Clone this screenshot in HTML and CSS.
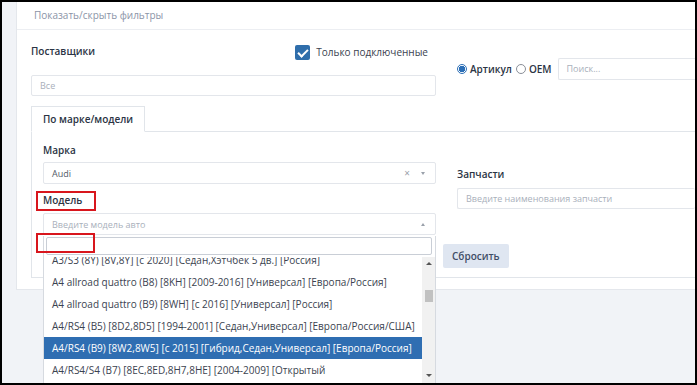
FILE: index.html
```html
<!DOCTYPE html>
<html lang="ru">
<head>
    <meta charset="UTF-8">
    <meta name="viewport" content="width=device-width, initial-scale=1.0">
    <title>Подбор запчастей</title>
    <link rel="stylesheet" href="styles.css">
</head>
<body>
    <div class="frame">
        <div class="card">
            <div class="card-head">Показать/скрыть фильтры</div>

            <div class="card-body">
                <div class="filters-top">
                    <div class="col-left">
                        <div class="label-row">
                            <span class="label">Поставщики</span>
                            <label class="check">
                                <span class="check-box"></span>
                                Только подключенные
                            </label>
                        </div>
                        <div class="input suppliers">Все</div>
                    </div>
                    <div class="col-right">
                        <div class="search-row">
                            <span class="radio checked"></span>
                            <span class="radio-text">Артикул</span>
                            <span class="radio"></span>
                            <span class="radio-text">OEM</span>
                            <div class="input search">Поиск...</div>
                        </div>
                    </div>
                </div>

                <div class="tabs">
                    <div class="tab active">По марке/модели</div>
                </div>

                <div class="tab-panel">
                    <div class="panel-grid">
                        <div class="col-left">
                            <div class="label">Марка</div>
                            <div class="select filled">
                                <span class="select-value">Audi</span>
                                <span class="select-clear">×</span>
                                <span class="caret down"></span>
                            </div>

                            <div class="label model-label">
                                Модель
                                <span class="mark"></span>
                            </div>
                            <div class="select-wrap">
                                <div class="select open">
                                    <span class="select-value placeholder">Введите модель авто</span>
                                    <span class="caret up"></span>
                                </div>

                                <!-- открытый список моделей -->
                                <div class="dropdown">
                                    <div class="dropdown-search">
                                        <div class="dropdown-input"></div>
                                        <span class="mark search-mark"></span>
                                    </div>
                                    <div class="dropdown-body">
                                        <ul class="options">
                                            <li class="first">A3/S3 (8Y) [8V,8Y] [с 2020] [Седан,Хэтчбек 5 дв.] [Россия]</li>
                                            <li>A4 allroad quattro (B8) [8KH] [2009-2016] [Универсал] [Европа/Россия]</li>
                                            <li>A4 allroad quattro (B9) [8WH] [с 2016] [Универсал] [Россия]</li>
                                            <li>A4/RS4 (B5) [8D2,8D5] [1994-2001] [Седан,Универсал] [Европа/Россия/США]</li>
                                            <li class="selected">A4/RS4 (B9) [8W2,8W5] [с 2015] [Гибрид,Седан,Универсал] [Европа/Россия]</li>
                                            <li>A4/RS4/S4 (B7) [8EC,8ED,8H7,8HE] [2004-2009] [Открытый</li>
                                        </ul>
                                        <div class="scrollbar">
                                            <span class="sb-arrow sb-up"></span>
                                            <span class="sb-thumb"></span>
                                            <span class="sb-arrow sb-down"></span>
                                        </div>
                                    </div>
                                </div>
                            </div>
                        </div>

                        <div class="col-right parts">
                            <div class="label">Запчасти</div>
                            <div class="input parts-input">Введите наименования запчасти</div>
                        </div>
                    </div>

                    <div class="actions">
                        <button type="button" class="btn-reset">Сбросить</button>
                    </div>
                </div>
            </div>
        </div>
    </div>
</body>
</html>
```

FILE: styles.css
```css
* {
    box-sizing: border-box;
}
body {
    margin: 0;
    font-family: 'Open Sans', 'Noto Sans', sans-serif;
    font-size: 10px;
    color: #3a4250;
}
.frame {
    height: 385px;
    border: 2px solid #000;
    background-color: #f1f3f7;
    padding-left: 14px;
    overflow: hidden;
}
.card {
    background-color: #fff;
    border-left: 1px solid #e4e7ec;
    border-bottom: 1px solid #e4e7ec;
}
.card-head {
    height: 28px;
    line-height: 27px;
    padding-left: 17px;
    color: #8b94a7;
    border-bottom: 1px solid #eceef2;
}
.card-body {
    padding: 0 0 11px 14px;
}
.label {
    font-weight: 600;
    color: #2b3444;
    line-height: 16px;
}
.input {
    height: 22px;
    line-height: 20px;
    border: 1px solid #e3e6eb;
    border-radius: 2px;
    padding-left: 8px;
    color: #a9b0bb;
    font-size: 9px;
}
.filters-top {
    display: flex;
    margin-top: 13px;
}
.col-left {
    width: 405px;
    flex-shrink: 0;
}
.col-right {
    flex: 1;
    margin-left: 21px;
}
.label-row {
    display: flex;
    justify-content: space-between;
    align-items: center;
    height: 16px;
    padding-right: 8px;
}
.check {
    display: flex;
    align-items: center;
    gap: 6px;
    color: #3a4250;
    margin-top: 2px;
}
.check-box {
    width: 15px;
    height: 15px;
    border-radius: 2px;
    background-color: #2f6eab;
    position: relative;
}
.check-box::after {
    content: '';
    position: absolute;
    left: 5px;
    top: 2px;
    width: 4px;
    height: 8px;
    border: solid #fff;
    border-width: 0 2px 2px 0;
    transform: rotate(45deg);
}
.suppliers {
    margin-top: 16px;
    height: 21px;
}
.search-row {
    display: flex;
    align-items: center;
    margin-top: 15px;
}
.radio {
    width: 10px;
    height: 10px;
    border-radius: 50%;
    border: 1px solid #8a8f98;
    margin-right: 3px;
}
.radio.checked {
    border-color: #2c6fb7;
    background: radial-gradient(circle, #2c6fb7 0 3px, #fff 3.5px);
}
.radio-text {
    font-weight: 600;
    color: #2b3444;
    margin-right: 4px;
}
.search {
    flex: 1;
    margin-left: 2px;
    border-right: none;
    border-radius: 2px 0 0 2px;
}
.tabs {
    display: flex;
    margin-top: 10px;
}
.tab {
    width: 114px;
    height: 26px;
    line-height: 25px;
    padding-left: 11px;
    font-weight: 600;
    color: #2b3444;
    border: 1px solid #e1e5ea;
    border-bottom-color: #fff;
    background-color: #fff;
    margin-bottom: -1px;
    position: relative;
    z-index: 1;
}
.tab-panel {
    border: 1px solid #e1e5ea;
    border-right: none;
    padding: 10px 0 9px 11px;
}
.panel-grid {
    display: flex;
}
.panel-grid .col-left {
    width: 393px;
}
.select {
    height: 22px;
    border: 1px solid #e3e6eb;
    border-radius: 2px;
    display: flex;
    align-items: center;
    padding: 0 10px 0 8px;
    margin-top: 4px;
    font-size: 9px;
}
.select-value {
    flex: 1;
    color: #525a66;
}
.select-value.placeholder {
    color: #a9b0bb;
}
.select-clear {
    color: #9aa1ab;
    font-size: 10px;
    margin-right: 11px;
}
.caret {
    width: 0;
    height: 0;
    border-left: 2.5px solid transparent;
    border-right: 2.5px solid transparent;
}
.caret.down {
    border-top: 3px solid #9aa1ab;
}
.caret.up {
    border-bottom: 3px solid #9aa1ab;
}
.model-label {
    position: relative;
    margin-top: 8px;
}
.mark {
    position: absolute;
    left: -7px;
    top: -1px;
    width: 60px;
    height: 20px;
    border: 2px solid #d8161d;
    z-index: 5;
}
.select-wrap {
    position: relative;
}
.select.open {
    margin-top: 5px;
}
.dropdown {
    position: absolute;
    left: 0;
    top: 23px;
    width: 393px;
    background-color: #fff;
    border: 1px solid #d6dae0;
    border-top: none;
    z-index: 3;
}
.dropdown-search {
    position: relative;
    padding: 1px 3px 2px 2px;
}
.dropdown-input {
    height: 18px;
    border: 1px solid #c9ced6;
    border-radius: 2px;
}
.search-mark {
    left: -8px;
    top: -3px;
    width: 59px;
}
.dropdown-body {
    display: flex;
    height: 126px;
}
.options {
    list-style: none;
    margin: 0;
    padding: 0;
    flex: 1;
    overflow: hidden;
}
.options li {
    height: 22px;
    line-height: 22px;
    padding-left: 8px;
    white-space: nowrap;
    color: #3b4350;
}
.options li.first {
    margin-top: -8px;
}
.options li.selected {
    background-color: #2f6eb2;
    color: #fff;
}
.scrollbar {
    width: 13px;
    background-color: #f1f1f1;
    display: flex;
    flex-direction: column;
    align-items: center;
}
.sb-arrow {
    width: 0;
    height: 0;
    border-left: 3px solid transparent;
    border-right: 3px solid transparent;
}
.sb-up {
    border-bottom: 3px solid #555;
    margin-top: 5px;
}
.sb-thumb {
    width: 8px;
    height: 12px;
    background-color: #c1c1c1;
    margin-top: 25px;
}
.sb-down {
    border-top: 3px solid #555;
    margin-top: auto;
    margin-bottom: 6px;
}
.parts {
    margin-top: 24px;
}
.parts-input {
    margin-top: 6px;
    height: 21px;
    border-right: none;
}
.actions {
    margin-top: 9px;
    padding-left: 400px;
}
.btn-reset {
    height: 24px;
    padding: 0 9px;
    border: none;
    border-radius: 2px;
    background-color: #dfe6f1;
    color: #3f4d66;
    font-family: inherit;
    font-size: 10px;
    font-weight: 600;
}
```
